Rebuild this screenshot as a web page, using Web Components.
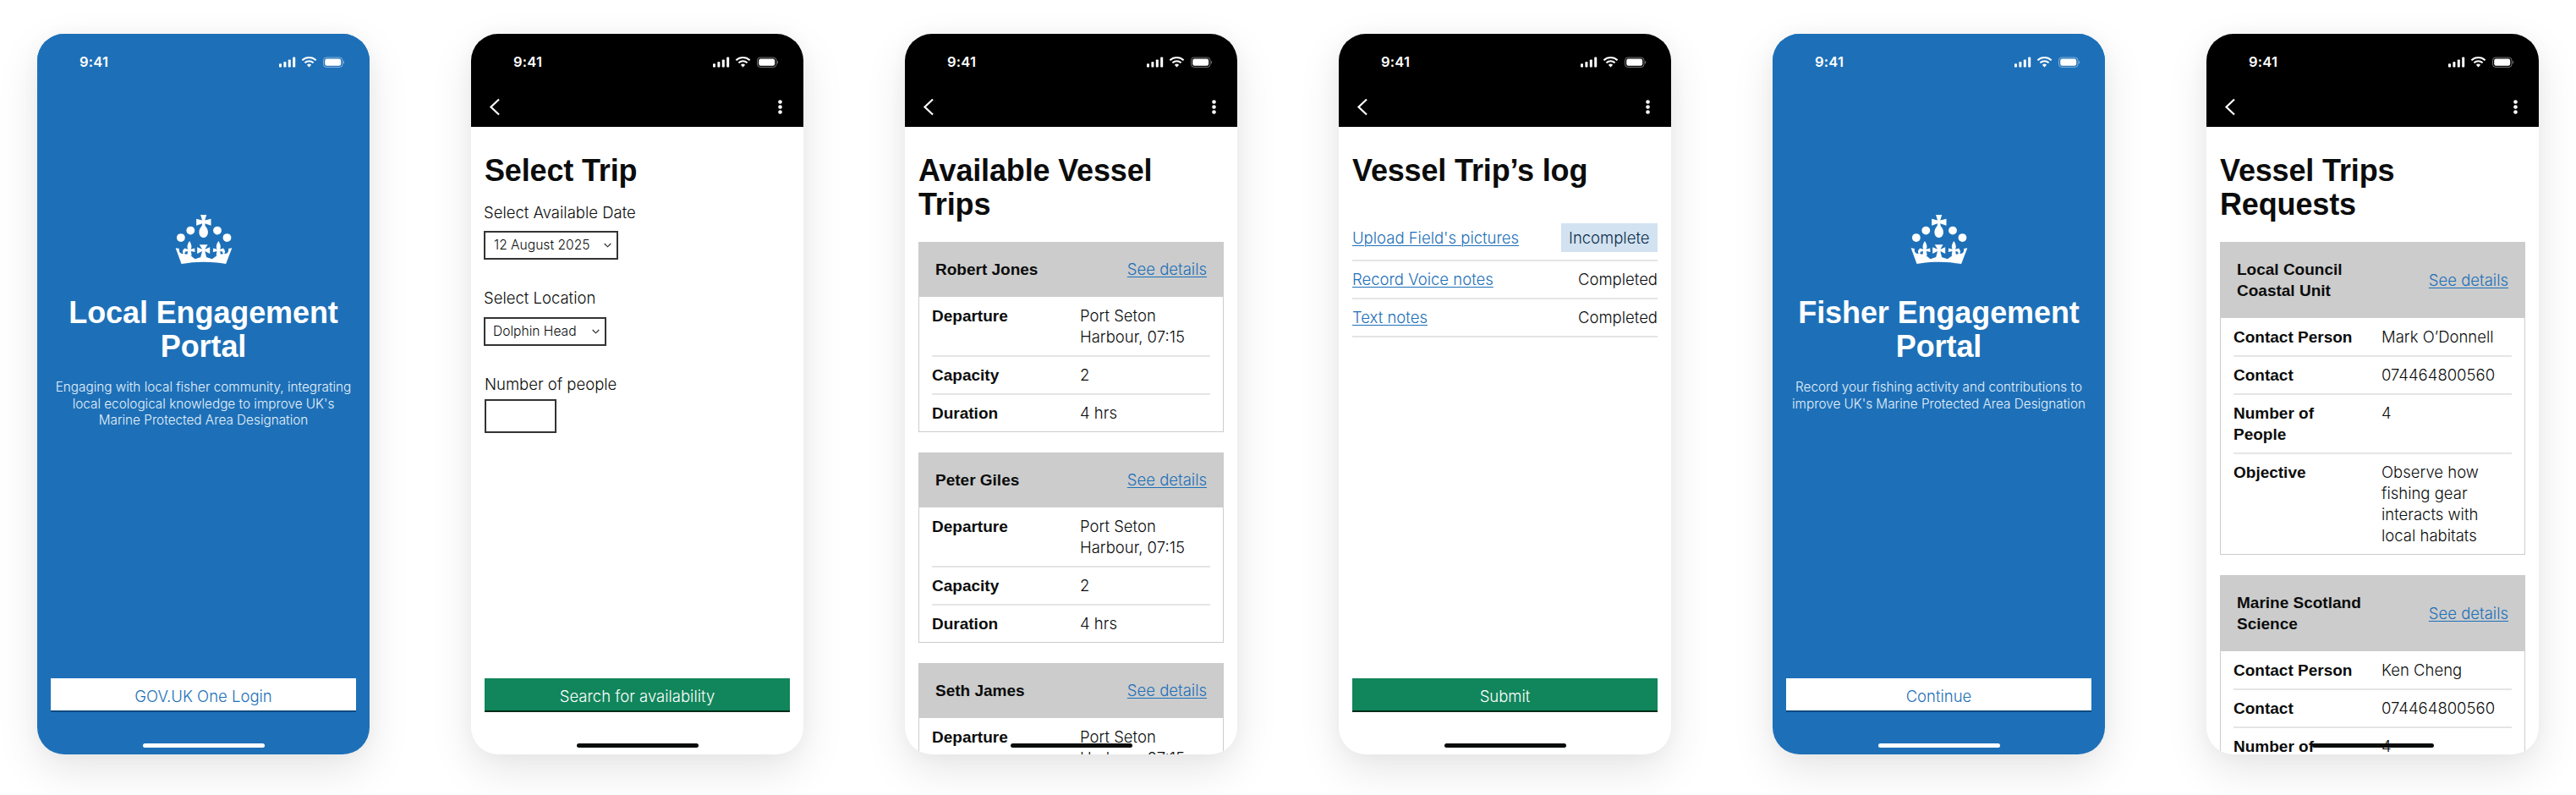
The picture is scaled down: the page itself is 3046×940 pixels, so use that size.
<!DOCTYPE html>
<html lang="en">
<head>
<meta charset="utf-8">
<title>Engagement Portal screens</title>
<style>
  html, body { margin: 0; background: #fff; }
  body { width: 3046px; height: 940px; overflow: hidden; box-sizing: border-box; padding: 40px 44px 0; display: flex; gap: 120px; align-items: flex-start; font: 19px/25px "Liberation Sans", Arial, sans-serif; color: #0b0c0c; }
</style>
</head>
<body>

<app-phone tone="blue">
  <status-bar></status-bar>
  <hero-screen>
    <span slot="title">Local Engagement<br>Portal</span>
    <span slot="text">Engaging with local fisher community, integrating<br>local ecological knowledge to improve UK's<br>Marine Protected Area Designation</span>
    <gov-button slot="action" kind="white">GOV.UK One Login</gov-button>
  </hero-screen>
</app-phone>

<app-phone>
  <status-bar></status-bar>
  <nav-bar></nav-bar>
  <app-screen>
    <screen-title gap="17">Select Trip</screen-title>
    <form-field label="Select Available Date" gap="9" after="33" nudge="-1"><fake-select width="159" pad="10">12 August 2025</fake-select></form-field>
    <form-field label="Select Location" gap="10" after="33" nudge="-1"><fake-select width="145" pad="9">Dolphin Head</fake-select></form-field>
    <form-field label="Number of people" gap="5" after="0"><number-box></number-box></form-field>
    <gov-button kind="green" pinned>Search for availability</gov-button>
  </app-screen>
</app-phone>

<app-phone>
  <status-bar></status-bar>
  <nav-bar></nav-bar>
  <app-screen>
    <screen-title gap="24">Available Vessel<br>Trips</screen-title>
    <trip-card>
      <span slot="name">Robert Jones</span>
      <trip-row><span slot="label">Departure</span>Port Seton<br>Harbour, 07:15</trip-row>
      <trip-row><span slot="label">Capacity</span>2</trip-row>
      <trip-row><span slot="label">Duration</span>4 hrs</trip-row>
    </trip-card>
    <trip-card>
      <span slot="name">Peter Giles</span>
      <trip-row><span slot="label">Departure</span>Port Seton<br>Harbour, 07:15</trip-row>
      <trip-row><span slot="label">Capacity</span>2</trip-row>
      <trip-row><span slot="label">Duration</span>4 hrs</trip-row>
    </trip-card>
    <trip-card>
      <span slot="name">Seth James</span>
      <trip-row><span slot="label">Departure</span>Port Seton<br>Harbour, 07:15</trip-row>
      <trip-row><span slot="label">Capacity</span>2</trip-row>
      <trip-row><span slot="label">Duration</span>4 hrs</trip-row>
    </trip-card>
  </app-screen>
</app-phone>

<app-phone>
  <status-bar></status-bar>
  <nav-bar></nav-bar>
  <app-screen>
    <screen-title gap="32">Vessel Trip’s log</screen-title>
    <log-row status="Incomplete" pill>Upload Field's pictures</log-row>
    <log-row status="Completed">Record Voice notes</log-row>
    <log-row status="Completed">Text notes</log-row>
    <gov-button kind="green" pinned>Submit</gov-button>
  </app-screen>
</app-phone>

<app-phone tone="blue">
  <status-bar></status-bar>
  <hero-screen>
    <span slot="title">Fisher Engagement<br>Portal</span>
    <span slot="text">Record your fishing activity and contributions to<br>improve UK's Marine Protected Area Designation</span>
    <gov-button slot="action" kind="white">Continue</gov-button>
  </hero-screen>
</app-phone>

<app-phone>
  <status-bar></status-bar>
  <nav-bar></nav-bar>
  <app-screen>
    <screen-title gap="24">Vessel Trips<br>Requests</screen-title>
    <trip-card>
      <span slot="name">Local Council<br>Coastal Unit</span>
      <trip-row><span slot="label">Contact Person</span>Mark O’Donnell</trip-row>
      <trip-row><span slot="label">Contact</span>074464800560</trip-row>
      <trip-row><span slot="label">Number of<br>People</span>4</trip-row>
      <trip-row><span slot="label">Objective</span>Observe how<br>fishing gear<br>interacts with<br>local habitats</trip-row>
    </trip-card>
    <trip-card>
      <span slot="name">Marine Scotland<br>Science</span>
      <trip-row><span slot="label">Contact Person</span>Ken Cheng</trip-row>
      <trip-row><span slot="label">Contact</span>074464800560</trip-row>
      <trip-row><span slot="label">Number of<br>People</span>4</trip-row>
    </trip-card>
  </app-screen>
</app-phone>

<script>
function component(tag, html, setup) {
  customElements.define(tag, class extends HTMLElement {
    constructor() {
      super();
      this.attachShadow({ mode: 'open' }).innerHTML = html;
    }
    connectedCallback() { if (setup) setup(this, this.shadowRoot); }
  });
}

const LIGHT = '300 18.5px/25px Inter, "Liberation Sans", Arial, sans-serif';

component('app-phone', `
  <style>
    :host { display: block; flex: none; position: relative; width: 393px; height: 852px; border-radius: 32px; background: #fff; box-shadow: 0 18px 50px rgba(0,0,0,.10), 0 0 22px rgba(0,0,0,.03); }
    :host([tone="blue"]) { background: #1d70b8; }
    .clip { width: 100%; height: 100%; border-radius: inherit; overflow: hidden; display: flex; flex-direction: column; }
    .home { position: absolute; left: 124.5px; bottom: 8px; width: 144px; height: 5px; border-radius: 3px; background: #0b0c0c; }
    :host([tone="blue"]) .home { background: #fff; }
  </style>
  <div class="clip"><slot></slot></div>
  <div class="home"></div>`);

component('status-bar', `
  <style>
    :host { display: flex; flex: none; align-items: center; justify-content: space-between; height: 66px; padding: 0 30px 0 50px; box-sizing: border-box; background: var(--bar, #000); color: #fff; }
    :host(.blue) { --bar: #1d70b8; }
    .time { font: 600 16.5px/20px Inter, "Liberation Sans", sans-serif; letter-spacing: .2px; }
    svg { display: block; width: 77px; height: 13px; }
  </style>
  <span class="time">9:41</span>
  <svg viewBox="0 0 77 13" fill="#fff" aria-hidden="true">
    <rect x="0" y="8.2" width="3" height="4.3" rx=".8"/>
    <rect x="5.4" y="6" width="3" height="6.5" rx=".8"/>
    <rect x="10.8" y="3.4" width="3" height="9.1" rx=".8"/>
    <rect x="16.2" y=".6" width="3" height="11.9" rx=".8"/>
    <path d="M27.4 4.3A11.8 11.8 0 0 1 43.6 4.3" fill="none" stroke="#fff" stroke-width="2"/>
    <path d="M30.4 7.3A7.6 7.6 0 0 1 40.6 7.3" fill="none" stroke="#fff" stroke-width="2"/>
    <path d="M32.9 9.7A3.9 3.9 0 0 1 38.1 9.7L35.5 12.5Z"/>
    <rect x="52.5" y="1" width="22.5" height="11.4" rx="3.4" fill="none" stroke="#fff" stroke-opacity=".45"/>
    <rect x="54.2" y="2.6" width="19" height="8.2" rx="2.2"/>
    <path d="M76 4.8c.8.3 1 1.1 1 1.9s-.2 1.6-1 1.9z" fill-opacity=".45"/>
  </svg>`, (el) => { if (el.parentElement.getAttribute('tone') === 'blue') el.classList.add('blue'); });

component('nav-bar', `
  <style>
    :host { display: flex; flex: none; align-items: center; justify-content: space-between; height: 44px; padding: 0 25px 3px 21px; box-sizing: border-box; background: #000; }
    svg { display: block; }
  </style>
  <svg width="14" height="21" viewBox="0 0 14 21" fill="none" stroke="#fff" stroke-width="2.2" aria-hidden="true"><path d="M12 1.5 2.5 10.5 12 19.5"/></svg>
  <svg width="5" height="17" viewBox="0 0 5 17" fill="#fff" aria-hidden="true"><circle cx="2.5" cy="2.5" r="2.3"/><circle cx="2.5" cy="8.5" r="2.3"/><circle cx="2.5" cy="14.5" r="2.3"/></svg>`);

component('app-screen', `
  <style>
    :host { display: flex; flex-direction: column; flex: 1 1 auto; min-height: 0; padding: 32px 16px 0; box-sizing: border-box; }
  </style>
  <slot></slot>`);

component('screen-title', `
  <style>
    :host { display: block; flex: none; font: 700 36px/40px "Liberation Sans", Arial, sans-serif; color: #0b0c0c; letter-spacing: -.15px; margin-bottom: var(--gap, 24px); }
  </style>
  <slot></slot>`, (el) => el.style.setProperty('--gap', el.getAttribute('gap') + 'px'));

component('hero-screen', `
  <style>
    :host { display: flex; flex-direction: column; flex: 1 1 auto; min-height: 0; align-items: center; padding: 147px 16px 0; box-sizing: border-box; color: #fff; text-align: center; }
    svg { display: block; width: 68px; height: 60px; flex: none; }
    h1 { margin: 37px 0 18px; font: 700 36px/40px "Liberation Sans", Arial, sans-serif; letter-spacing: -.1px; }
    p { margin: 0; font: 300 15.3px/19.5px Inter, "Liberation Sans", Arial, sans-serif; color: #e6f0f8; }
    .action { margin-top: auto; margin-bottom: 50px; align-self: stretch; }
  </style>
  <svg viewBox="78 38 208 182" fill="#fff" aria-hidden="true">
    <path d="M170 40H192L186 60 208 55V79L186 72 187 80C194 88 197 95 197 103 197 115 190 123 181 123 172 123 165 115 165 103 165 95 168 88 175 80L176 72 155 79V55L176 60Z"/>
    <circle cx="134" cy="97" r="15"/><circle cx="231" cy="97" r="15"/>
    <circle cx="99" cy="123" r="15"/><circle cx="266" cy="123" r="15"/>
    <path d="M80 160 93 163C91 172 96 182 108 181 104 175 105 168 110 164 115 168 115 176 112 182L130 184 150 200 181 190 212 200 235 184 252 182C249 176 249 168 254 164 259 168 260 175 256 181 268 182 273 172 271 163L284 160 262 218C210 208 152 208 101 218Z"/>
    <path d="M130 135C138 147 140 157 135 165L149 161 150 175 136 172 138 188H122L124 172 110 175 111 161 125 165C120 157 122 147 130 135Z"/>
    <path d="M235 135C243 147 245 157 240 165L254 161 255 175 241 172 243 188H227L229 172 215 175 216 161 230 165C225 157 227 147 235 135Z"/>
    <path d="M166 148H196L186 165 204 157V181L186 172 192 195H170L176 172 158 181V157L176 165Z"/>
  </svg>
  <h1><slot name="title"></slot></h1>
  <p><slot name="text"></slot></p>
  <div class="action"><slot name="action"></slot></div>`);

component('gov-button', `
  <style>
    :host { display: block; flex: none; height: 38px; box-sizing: border-box; padding-top: 9px; font: ${LIGHT}; text-align: center; margin-bottom: 2px; }
    :host([kind="white"]) { background: #fff; color: #1d70b8; box-shadow: 0 2px 0 #0b4a7f; }
    :host([kind="green"]) { background: #11855b; color: #fff; box-shadow: 0 2px 0 #002d18; }
    :host([pinned]) { margin-top: auto; margin-bottom: 52px; }
  </style>
  <slot></slot>`);

component('form-field', `
  <style>
    :host { display: block; flex: none; }
    .label { font: ${LIGHT}; color: #0b0c0c; }
  </style>
  <div class="label"></div>
  <div class="box"><slot></slot></div>`, (el, root) => {
    root.querySelector('.label').textContent = el.getAttribute('label');
    root.querySelector('.label').style.marginBottom = el.getAttribute('gap') + 'px';
    el.style.marginBottom = el.getAttribute('after') + 'px';
    if (el.hasAttribute('nudge')) el.style.marginLeft = el.getAttribute('nudge') + 'px';
  });

component('fake-select', `
  <style>
    :host { display: flex; align-items: center; justify-content: space-between; height: 34px; box-sizing: border-box; border: 2px solid #333; font: 300 15.6px/20px Inter, "Liberation Sans", Arial, sans-serif; color: #0b0c0c; padding-right: 6px; }
    svg { display: block; }
  </style>
  <slot></slot>
  <svg width="9" height="6" viewBox="0 0 9 6" fill="none" stroke="#222" stroke-width="1.1"><path d="M.7 1 4.5 4.8 8.3 1"/></svg>`, (el) => {
    el.style.width = el.getAttribute('width') + 'px';
    el.style.paddingLeft = el.getAttribute('pad') + 'px';
  });

component('number-box', `
  <style>
    :host { display: block; width: 85px; height: 40px; box-sizing: border-box; }
    input { display: block; width: 100%; height: 100%; box-sizing: border-box; margin: 0; border: 2px solid #333; border-radius: 0; background: #fff; padding: 0; }
  </style>
  <input type="text" aria-label="Number of people">`);

component('trip-card', `
  <style>
    :host { display: block; flex: none; margin-bottom: 24px; }
    header { display: flex; align-items: center; justify-content: space-between; background: #ccc; padding: 20px; font: 700 19px/25px "Liberation Sans", Arial, sans-serif; color: #0b0c0c; }
    a { font: ${LIGHT}; color: #1d70b8; text-decoration: underline; text-decoration-thickness: 1px; text-underline-offset: 2px; }
    .rows { border: 1px solid #ccc; border-top: 0; padding: 0 15px; }
  </style>
  <header><span><slot name="name"></slot></span><a href="#">See details</a></header>
  <div class="rows"><slot></slot></div>`);

component('trip-row', `
  <style>
    :host { display: grid; grid-template-columns: 175px 1fr; padding: 10px 0; font: ${LIGHT}; color: #0b0c0c; box-shadow: 0 1px 0 #e5e5e5, inset 0 -1px 0 #e5e5e5; }
    :host(:last-child) { box-shadow: none; padding-bottom: 9px; }
    .label { font: 700 19px/25px "Liberation Sans", Arial, sans-serif; color: #0b0c0c; }
  </style>
  <div class="label"><slot name="label"></slot></div>
  <div><slot></slot></div>`);

component('log-row', `
  <style>
    :host { display: flex; flex: none; align-items: center; justify-content: space-between; padding: 10px 0; font: ${LIGHT}; box-shadow: 0 1px 0 #e5e5e5, inset 0 -1px 0 #e5e5e5; }
    a { color: #1d70b8; text-decoration: underline; text-decoration-thickness: 1px; text-underline-offset: 2px; }
    .status { color: #0b0c0c; }
    .status.pill { height: 34px; line-height: 34px; padding: 0 9.5px; background: #d2e2f1; color: #0c2d4a; }
  </style>
  <a href="#"><slot></slot></a>
  <span class="status"></span>`, (el, root) => {
    const s = root.querySelector('.status');
    s.textContent = el.getAttribute('status');
    s.classList.toggle('pill', el.hasAttribute('pill'));
  });
</script>
</body>
</html>
